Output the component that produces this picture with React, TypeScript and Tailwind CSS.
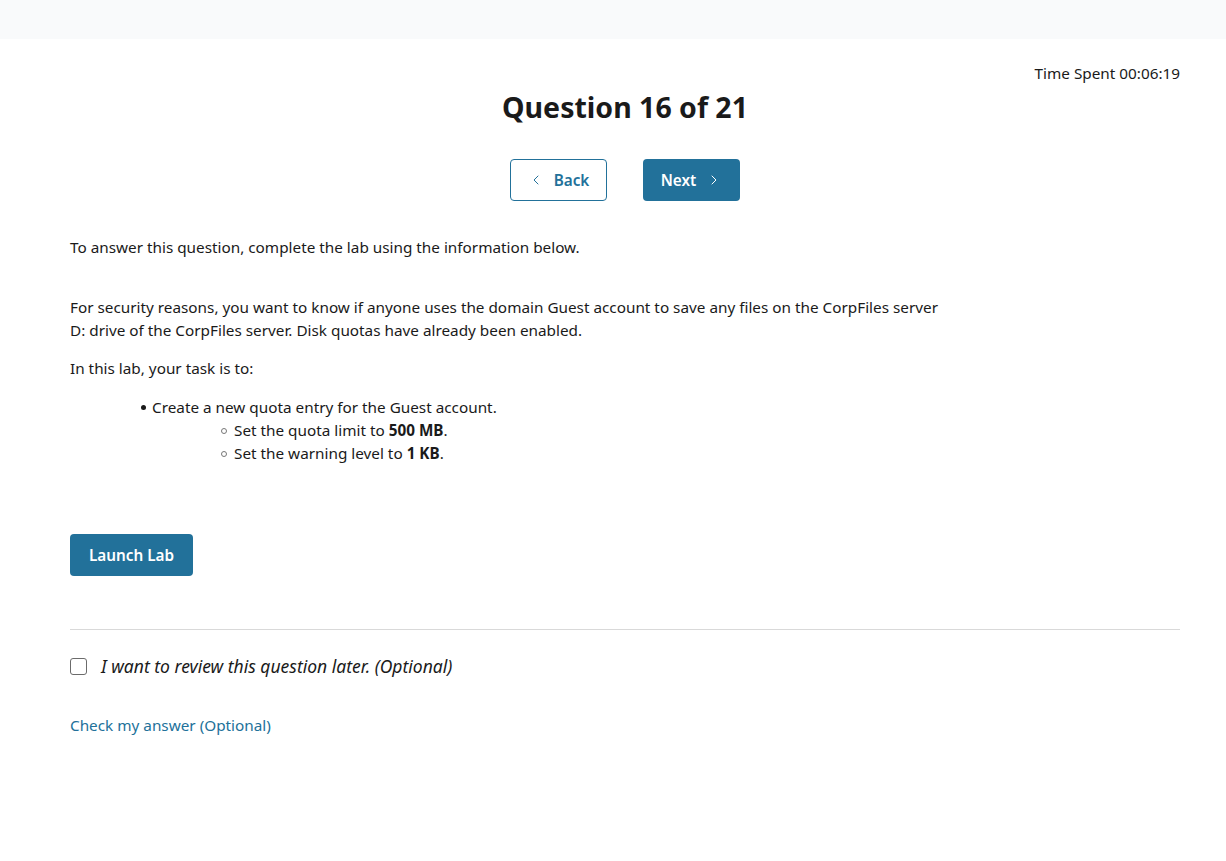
import { ChevronLeft, ChevronRight } from "lucide-react";

function Sub({ children }: { children: React.ReactNode }) {
  return (
    <li className="flex items-center">
      <span className="mr-[7px] ml-[80px] h-[6px] w-[6px] rounded-full border border-[#777]" />
      <span>{children}</span>
    </li>
  );
}

export default function App() {
  return (
    <div className="min-h-[861px] bg-white text-[#1a1a1a]" style={{ fontFamily: '"Noto Sans", sans-serif' }}>
      {/* top bar */}
      <div className="h-[39px] bg-[#f9fafb]" />

      <div className="px-[70px] pr-[46px]">
        <div className="flex justify-end pt-[24px] text-[15.3px] leading-[20px]">Time Spent 00:06:19</div>

        <h1 className="mt-[6px] text-center text-[28.5px] font-bold leading-[36px]">Question 16 of 21</h1>

        <div className="mt-[34px] flex justify-center gap-[36px]">
          <button className="flex h-[42px] w-[97px] items-center justify-center gap-[10px] rounded-[4px] border border-[#22719a] text-[15.3px] font-semibold text-[#22719a]">
            <ChevronLeft size={16} strokeWidth={1.5} />
            Back
          </button>
          <button className="flex h-[42px] w-[97px] items-center justify-center gap-[10px] rounded-[4px] bg-[#22719a] text-[15.3px] font-semibold text-white">
            Next
            <ChevronRight size={16} strokeWidth={1.5} />
          </button>
        </div>

        <div className="mt-[35px] text-[15.3px] leading-[23px]">
          <p>To answer this question, complete the lab using the information below.</p>
          <p className="mt-[37px] max-w-[875px]">
            For security reasons, you want to know if anyone uses the domain Guest account to save any files on the CorpFiles server D: drive of the CorpFiles server. Disk quotas have already been enabled.
          </p>
          <p className="mt-[15px]">In this lab, your task is to:</p>
          <ul className="mt-[16px] pl-[71px]">
            <li>
              <div className="flex items-center">
                <span className="mr-[6px] h-[5px] w-[5px] rounded-full bg-[#1a1a1a]" />
                <span>Create a new quota entry for the Guest account.</span>
              </div>
              <ul>
                <Sub>
                  Set the quota limit to <b>500 MB</b>.
                </Sub>
                <Sub>
                  Set the warning level to <b>1 KB</b>.
                </Sub>
              </ul>
            </li>
          </ul>
        </div>

        <button className="mt-[69px] h-[42px] w-[123px] rounded-[4px] bg-[#22719a] text-[15.3px] font-semibold text-white">
          Launch Lab
        </button>

        <div className="mt-[53px] border-t border-[#d9d9d9]" />

        <label className="mt-[24px] flex items-center gap-[14px]">
          <span className="h-[17px] w-[17px] rounded-[3px] border border-[#6b6b6b] bg-white" />
          <span className="text-[17.5px] italic leading-[24px]">I want to review this question later. (Optional)</span>
        </label>

        <a className="mt-[37px] block text-[15.3px] leading-[20px] text-[#22719a]">Check my answer (Optional)</a>
      </div>
    </div>
  );
}
